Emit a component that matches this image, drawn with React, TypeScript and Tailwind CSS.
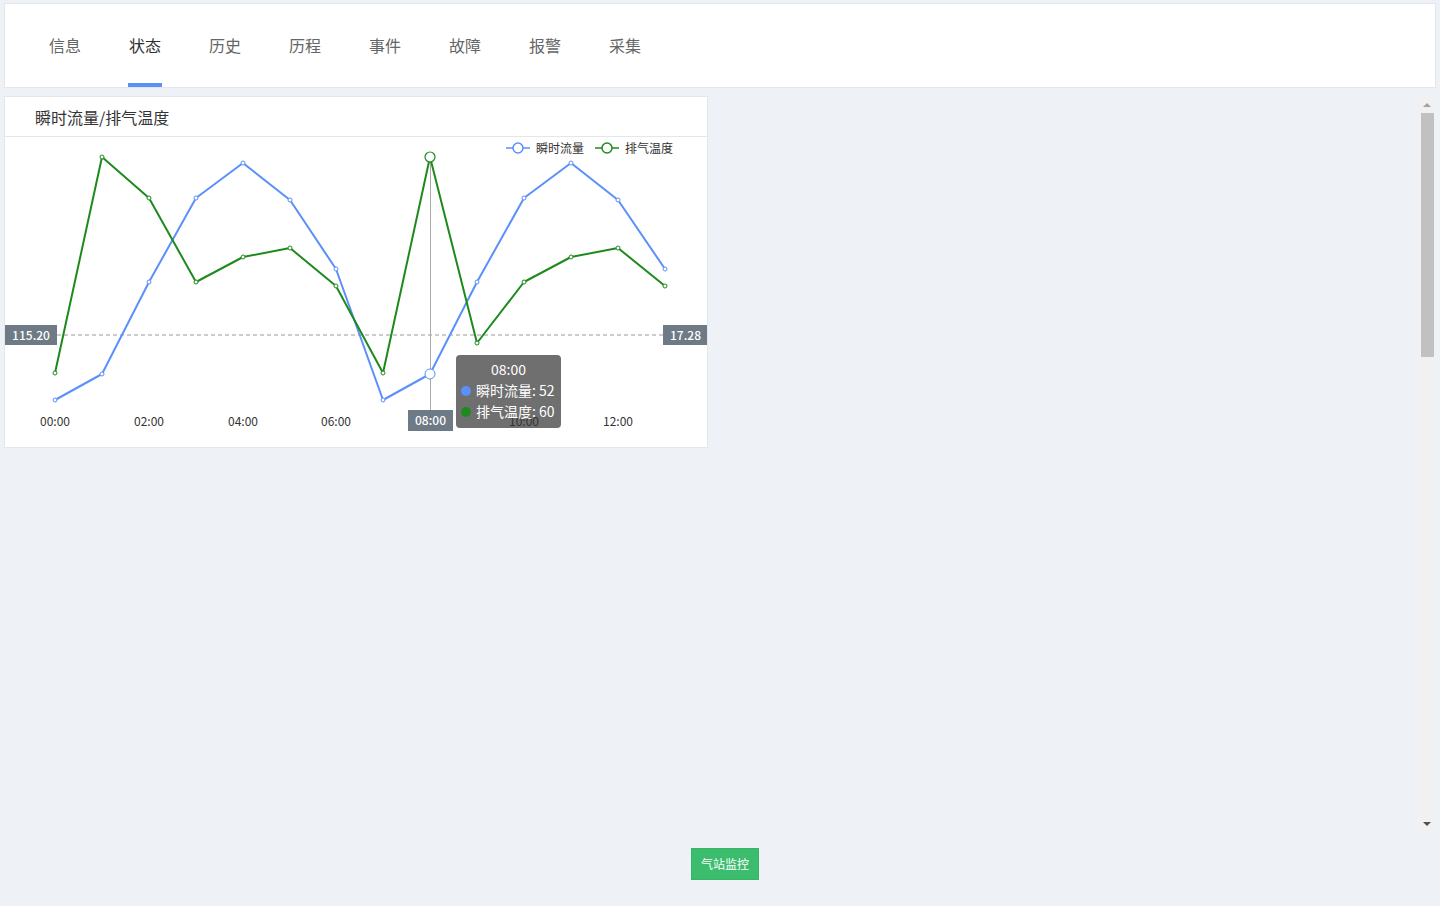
import React from "react";

const xs = [55, 102, 149, 196, 243, 290, 336, 383, 430, 477, 524, 571, 618, 665];
const blueY = [400, 374, 282, 198, 163, 200, 269, 400, 374, 282, 198, 163, 200, 269];
const greenY = [373, 157, 198, 282, 257, 248, 286, 373, 157, 343, 282, 257, 248, 286];
const BLUE = "#5b8ff9";
const GREEN = "#1e8a1e";
const FONT = '"Noto Sans CJK SC", "Noto Sans", sans-serif';

const tabs = ["信息", "状态", "历史", "历程", "事件", "故障", "报警", "采集"];

function Chart() {
  const pts = (ys: number[]) => xs.map((x, i) => `${x},${ys[i]}`).join(" ");
  const xLabels: [number, string][] = [
    [55, "00:00"],
    [149, "02:00"],
    [243, "04:00"],
    [336, "06:00"],
    [524, "10:00"],
    [618, "12:00"],
  ];
  return (
    <svg
      width={702}
      height={310}
      viewBox="5 137 702 310"
      className="block"
      style={{ fontFamily: FONT }}
    >
      {/* legend */}
      <line x1={506} y1={148} x2={530} y2={148} stroke={BLUE} strokeWidth={1.5} />
      <circle cx={518} cy={148} r={5} fill="#fff" stroke={BLUE} strokeWidth={1.5} />
      <text x={536} y={152.5} fontSize={12} fill="#333">瞬时流量</text>
      <line x1={595} y1={148} x2={619} y2={148} stroke={GREEN} strokeWidth={1.5} />
      <circle cx={607} cy={148} r={5} fill="#fff" stroke={GREEN} strokeWidth={1.5} />
      <text x={625} y={152.5} fontSize={12} fill="#333">排气温度</text>

      {/* x labels */}
      {xLabels.map(([x, t]) => (
        <text key={t} x={x} y={426} fontSize={12} fill="#333" textAnchor="middle">
          {t}
        </text>
      ))}

      {/* dashed line */}
      <line x1={57} y1={335} x2={663} y2={335} stroke="#9a9a9a" strokeDasharray="4 3" strokeWidth={1} />

      {/* vertical pointer */}
      <line x1={430.5} y1={157} x2={430.5} y2={410} stroke="#aaaaaa" strokeWidth={1} />

      {/* series */}
      <polyline points={pts(blueY)} fill="none" stroke={BLUE} strokeWidth={2} strokeLinejoin="round" />
      <polyline points={pts(greenY)} fill="none" stroke={GREEN} strokeWidth={2} strokeLinejoin="round" />
      {xs.map((x, i) =>
        i === 8 ? null : (
          <circle key={"b" + i} cx={x} cy={blueY[i]} r={2} fill="#fff" stroke={BLUE} strokeWidth={1} />
        )
      )}
      {xs.map((x, i) =>
        i === 8 ? null : (
          <circle key={"g" + i} cx={x} cy={greenY[i]} r={2} fill="#fff" stroke={GREEN} strokeWidth={1} />
        )
      )}
      <circle cx={430} cy={374} r={5} fill="#fff" stroke={BLUE} strokeWidth={1} />
      <circle cx={430} cy={157} r={5} fill="#fff" stroke={GREEN} strokeWidth={1.2} />

      {/* axis pointer labels */}
      <rect x={5} y={325} width={52} height={20} fill="#6e7a85" />
      <text x={31} y={339.5} fontSize={12} fill="#fff" textAnchor="middle" fontWeight={500}>115.20</text>
      <rect x={663} y={325} width={45} height={20} fill="#6e7a85" />
      <text x={685.5} y={339.5} fontSize={12} fill="#fff" textAnchor="middle" fontWeight={500}>17.28</text>
      <rect x={408} y={410} width={45} height={21} fill="#6e7a85" />
      <text x={430.5} y={425} fontSize={12} fill="#fff" textAnchor="middle" fontWeight={500}>08:00</text>
    </svg>
  );
}

export default function App() {
  return (
    <div
      className="w-[1440px] h-[906px] bg-[#eef1f6] pt-[3px] pl-1 overflow-hidden"
      style={{ fontFamily: FONT }}
    >
      {/* top tabs */}
      <div className="w-[1432px] h-[85px] bg-white border border-[#e3e6eb] flex items-stretch pl-[43px]">
        {tabs.map((t, i) => (
          <div
            key={t}
            className={
              "w-[34px] mr-[46px] flex items-center justify-center pt-[2px] border-b-4 text-[16px] " +
              (i === 1 ? "border-[#5b8ff9] text-[#303133]" : "border-transparent text-[#666]")
            }
          >
            {t}
          </div>
        ))}
      </div>

      {/* main row */}
      <div className="mt-2 w-[1432px] h-[736px] flex items-start justify-between">
        <div className="relative w-[704px] h-[352px] bg-white border border-[#e3e6eb]">
          <div className="h-[40px] border-b border-[#e3e6eb] flex items-center pl-[30px] pt-[1px] text-[16px] text-[#333]">
            瞬时流量/排气温度
          </div>
          <Chart />
          {/* tooltip */}
          <div className="absolute left-[451px] top-[258px] w-[105px] h-[73px] rounded-[4px] bg-[rgba(50,50,50,0.7)] text-white text-[14px] leading-[21px] pt-[4px] pl-[5px]">
            <div className="text-center pr-[5px]">08:00</div>
            <div className="flex items-center gap-[5px]">
              <span className="inline-block w-[10px] h-[10px] rounded-full bg-[#5b8ff9]" />
              <span>瞬时流量: 52</span>
            </div>
            <div className="flex items-center gap-[5px]">
              <span className="inline-block w-[10px] h-[10px] rounded-full bg-[#1e8a1e]" />
              <span>排气温度: 60</span>
            </div>
          </div>
        </div>

        {/* scrollbar */}
        <div className="w-[16px] h-[736px] bg-[#f1f1f1] flex flex-col items-center mr-[1px]">
          <div className="h-[17px] flex items-center justify-center">
            <div className="w-0 h-0 border-l-[4px] border-r-[4px] border-b-[4px] border-l-transparent border-r-transparent border-b-[#a3a3a3]" />
          </div>
          <div className="w-[13px] h-[244px] bg-[#c1c1c1]" />
          <div className="flex-1" />
          <div className="h-[17px] flex items-center justify-center">
            <div className="w-0 h-0 border-l-[4px] border-r-[4px] border-t-[4px] border-l-transparent border-r-transparent border-t-[#505050]" />
          </div>
        </div>
      </div>

      {/* button */}
      <div className="mt-4 flex justify-center pl-[6px] w-[1436px]">
        <button className="w-[68px] h-[32px] bg-[#3cbd6d] text-white text-[12px] border border-[#36b565]">
          气站监控
        </button>
      </div>
    </div>
  );
}
